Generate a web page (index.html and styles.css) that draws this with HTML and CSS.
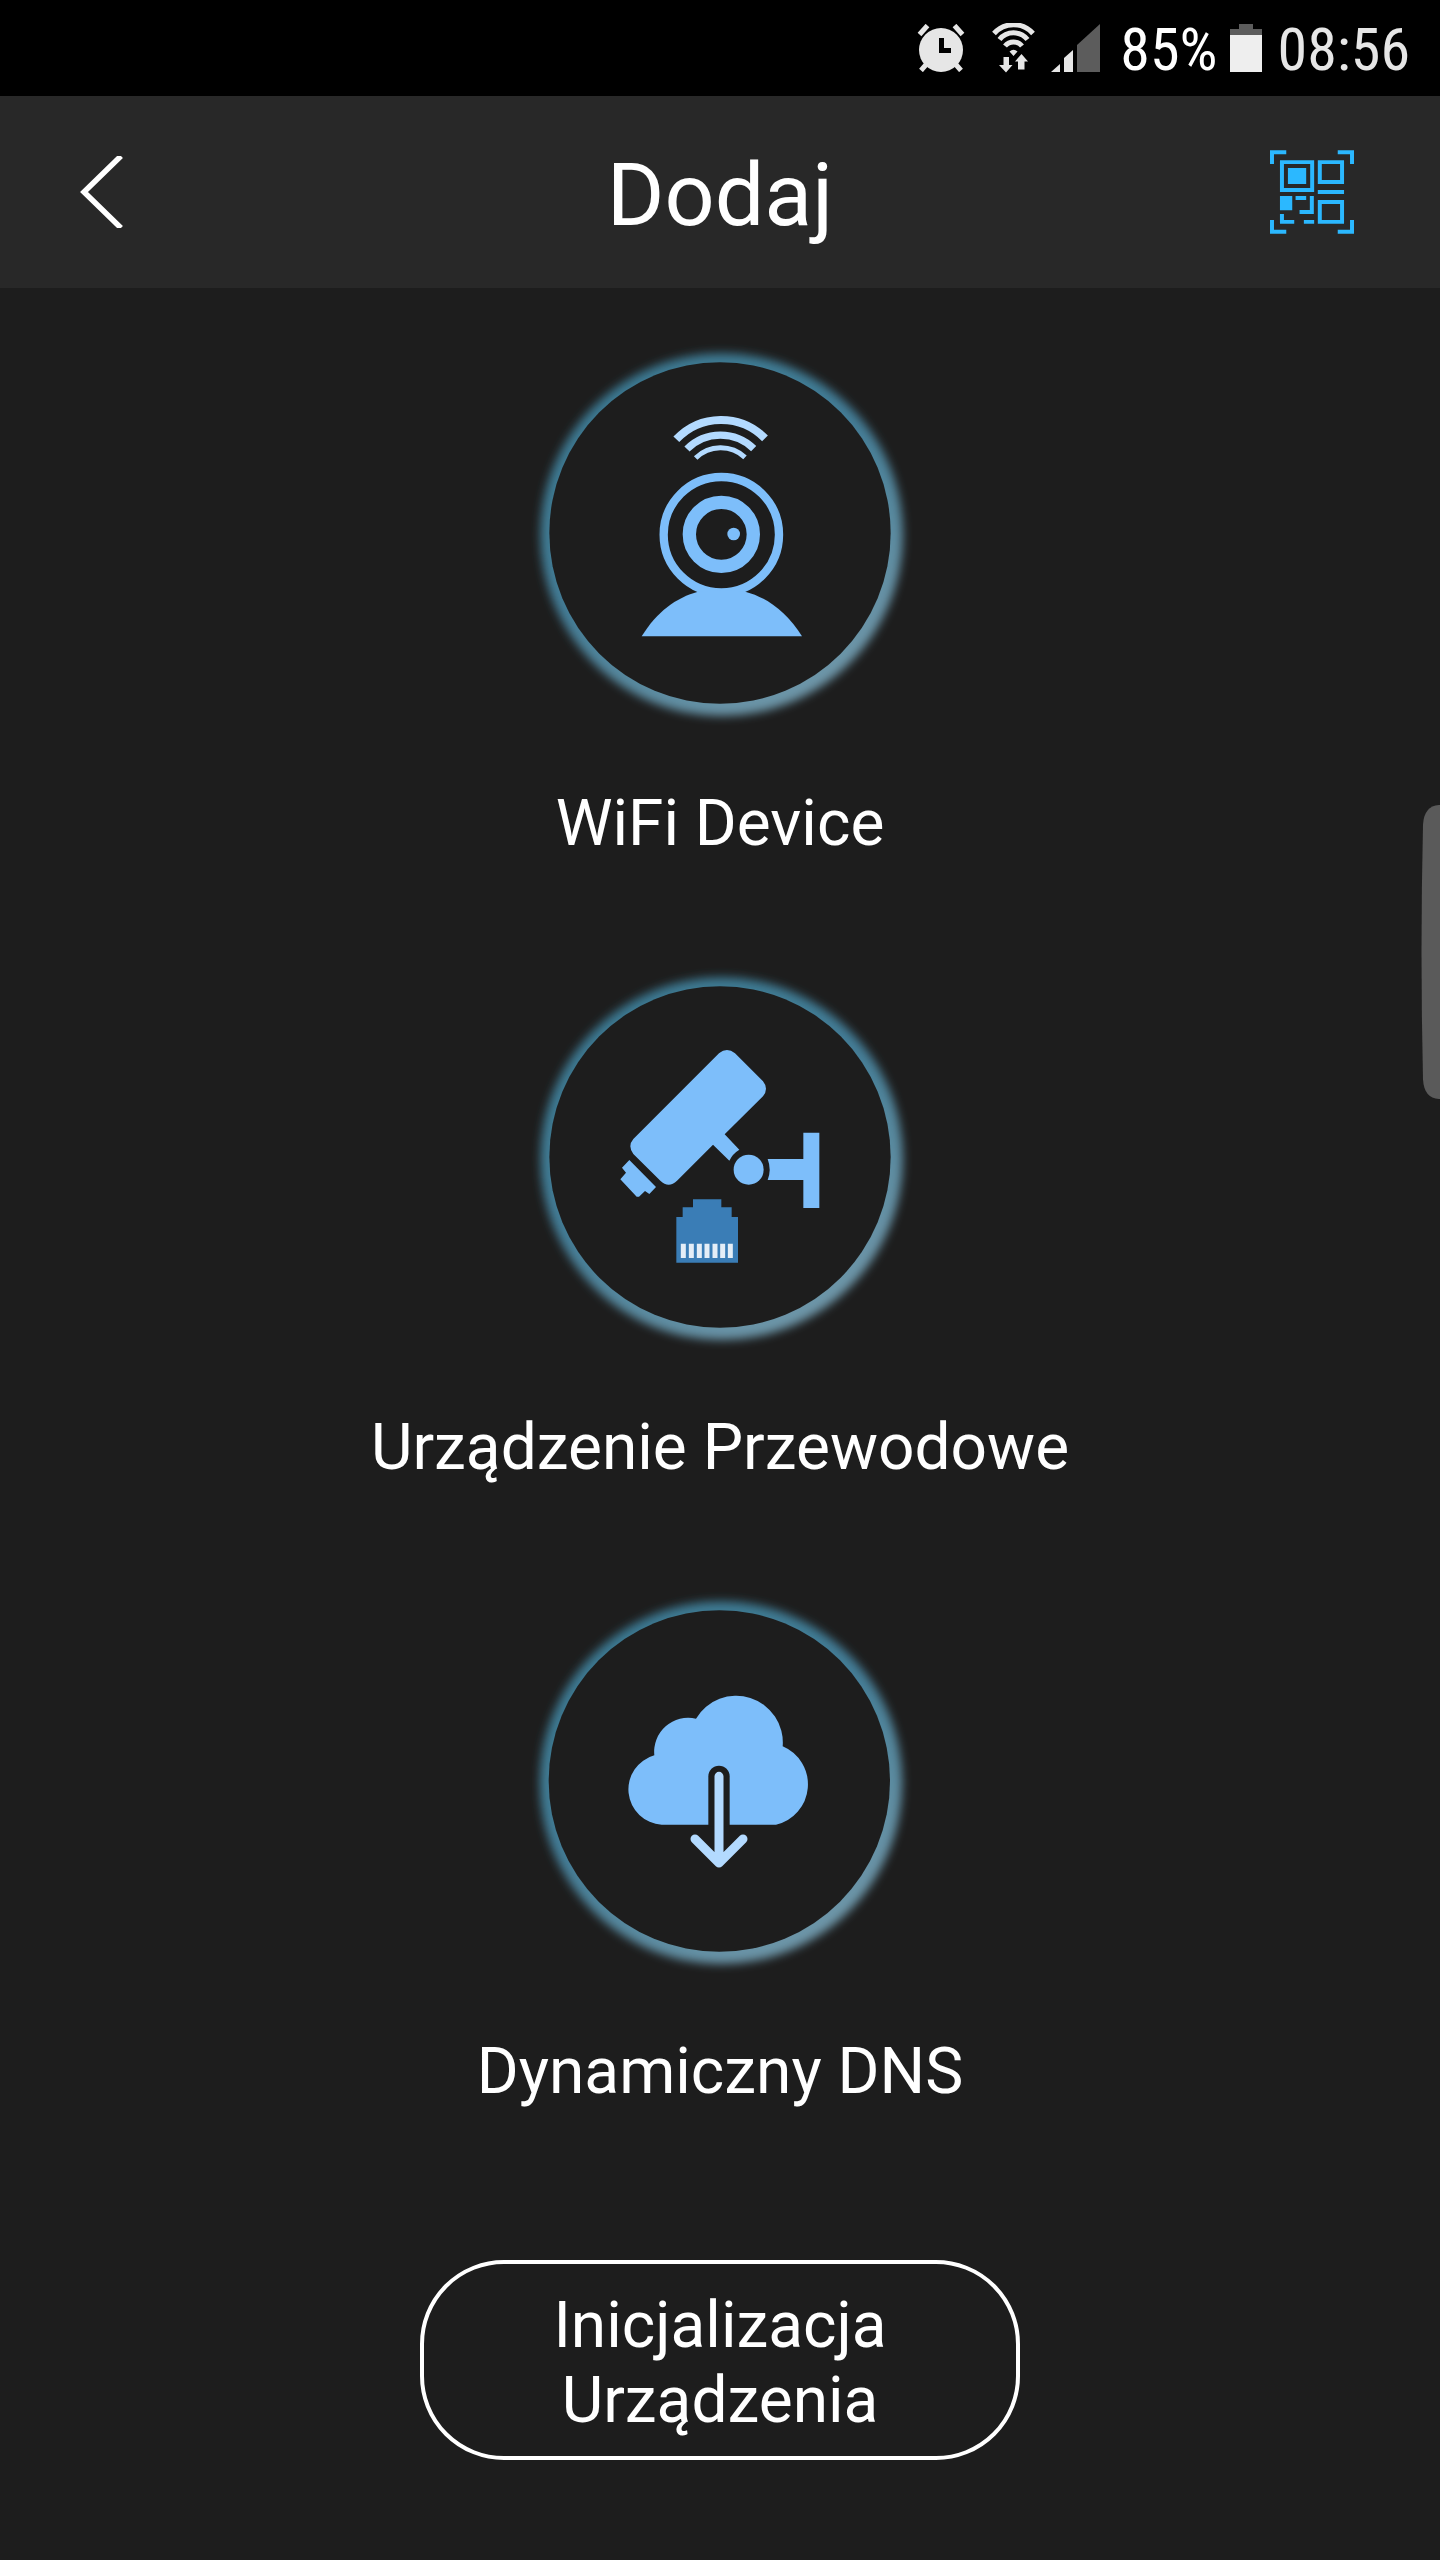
FILE: index.html
```html
<!DOCTYPE html>
<html lang="pl">
<head>
<meta charset="utf-8">
<meta name="viewport" content="width=device-width, initial-scale=1">
<title>Dodaj</title>
<link rel="stylesheet" href="styles.css">
</head>
<body>
<div class="status-bar">
  <svg class="status-alarm" width="48" height="48" viewBox="0 0 48 48" aria-hidden="true">
    <path d="M2.5 10.5l8-9M45.5 10.5l-8-9M4 46.500l6-7M44 46.500l-6-7" stroke="#e6e6e6" stroke-width="5"/>
    <circle cx="24" cy="26" r="22" fill="#e6e6e6"/>
    <path d="M22 14h5v10h7v5H22z" fill="#000"/>
  </svg>
  <svg class="status-wifi" width="43" height="50" viewBox="0 0 43 50" aria-hidden="true">
    <g fill="none" stroke="#e6e6e6" stroke-width="5">
      <path d="M2 10.500A26 26 0 0 1 41 10.500"/>
      <path d="M7.500 16.500A18 18 0 0 1 35.500 16.500"/>
      <path d="M13 23A11 11 0 0 1 30 23"/>
    </g>
    <path d="M17.500 28.500q4-3.500 8 0l-4 4.500zM11.500 34h5.500v8h3.500L14 49.500 7 42h4.500zM26 46.500v-8h-3L29.500 31l6.500 7.500h-3.500v8z" fill="#e6e6e6"/>
  </svg>
  <svg class="status-signal" width="49" height="48" viewBox="0 0 49 48" aria-hidden="true">
    <path d="M0 48l9-8v8zM13 34l9-8v22h-9z" fill="#e6e6e6"/>
    <path d="M26 21L49 0v48H26z" fill="#5c5c5c"/>
  </svg>
  <span class="status-text battery-level">85%</span>
  <svg class="status-battery" width="32" height="48" viewBox="0 0 32 48" aria-hidden="true">
    <path d="M9 0h14v5h9v6H0V5h9z" fill="#5c5c5c"/>
    <path d="M0 11h32v37H0z" fill="#eee"/>
  </svg>
  <time class="status-text clock">08:56</time>
</div>

<header class="header">
  <button class="icon-button" type="button" aria-label="Wstecz">
    <svg width="44" height="72" viewBox="0 0 44 72" aria-hidden="true">
      <path d="M41 0L4 36l37 36" fill="none" stroke="#fff" stroke-width="5.500"/>
    </svg>
  </button>
  <h1 class="title">Dodaj</h1>
  <button class="icon-button" type="button" aria-label="Skanuj kod QR">
    <svg width="84" height="84" viewBox="90 60 253 252" aria-hidden="true">
      <g fill="none" stroke="#2bb8ff" stroke-width="12">
        <path d="M96 102V66h43M294 66h43v36M96 270v36h43M294 306h43v-36"/>
        <path d="M126 96h91v84h-91zM240 96h67v60h-67zM240 216h67v60h-67z"/>
        <path d="M234 186h79M167 204h32M216 198v48h-37M126 252v24h37M192 276h31"/>
      </g>
      <path d="M144 114h55v48h-55zM120 198h37v43h-37z" fill="#2bb8ff"/>
    </svg>
  </button>
</header>

<main class="content">
  <svg class="defs" width="0" height="0" aria-hidden="true">
    <defs>
      <linearGradient id="glow-color" x1="0.2" y1="0.1" x2="0.75" y2="0.95">
        <stop offset="0" stop-color="#3b7891"/>
        <stop offset="0.450" stop-color="#447d96"/>
        <stop offset="1" stop-color="#7097a9"/>
      </linearGradient>
      <filter id="glow-blur" x="-10%" y="-10%" width="120%" height="120%">
        <feGaussianBlur stdDeviation="15"/>
      </filter>
      <symbol id="ring" viewBox="0 0 1200 1200">
        <circle cx="605" cy="605" r="544" fill="url(#glow-color)" filter="url(#glow-blur)"/>
        <circle cx="600" cy="600" r="512" fill="#1d1d1d"/>
      </symbol>
    </defs>
  </svg>

  <nav class="devices">
    <a class="device" href="#wifi">
      <svg class="device-icon" viewBox="0 9 1200 1200" aria-hidden="true">
        <use href="#ring" x="0" y="9" width="1200" height="1200"/>
        <g fill="none" stroke="#b3daff">
          <path d="M469 328A184 184 0 0 1 735 325" stroke-width="24"/>
          <path d="M501 357A142 142 0 0 1 701 356" stroke-width="22"/>
          <path d="M527 384A107 107 0 0 1 675 382" stroke-width="15"/>
        </g>
        <g fill="none" stroke="#7dbefa">
          <circle cx="604" cy="614" r="173" stroke-width="25"/>
          <circle cx="604" cy="613" r="96" stroke-width="40"/>
        </g>
        <g fill="#7dbefa">
          <circle cx="641" cy="612" r="19"/>
          <path d="M365 919C410 845 470 802 534 785L604 780l72 5C740 802 800 845 846 919z"/>
        </g>
      </svg>
      <span class="device-label">WiFi Device</span>
    </a>

    <a class="device" href="#wired">
      <svg class="device-icon" viewBox="0 -9 1200 1200" aria-hidden="true">
        <use href="#ring" x="0" y="-9" width="1200" height="1200"/>
        <g fill="#7dbefa">
          <path d="M597 280q24-20 48 0l84 84q18 22 0 45L614 523l44 46q-20 12-30 33l-49-48L471 662q-25 24-50 0l-81-80q-18-24 0-45z"/>
          <path d="M328 600l80 81-20 21-13-9-18 17h-7l-49-52 17-20-12-15z"/>
          <circle cx="686" cy="629" r="45"/>
          <path d="M743 597h107v-79h48v226h-48v-84H743q12-31 0-63z"/>
        </g>
        <path d="M469 771h19v-29h31v-24h85v24h31v29h19v137H469z" fill="#3a7db6"/>
        <path d="M490 851v43M514 851v43M538 851v43M561 851v43M585 851v43M608 851v43M631 851v43" stroke="#e4eef7" stroke-width="15"/>
      </svg>
      <span class="device-label">Urządzenie Przewodowe</span>
    </a>

    <a class="device" href="#ddns">
      <svg class="device-icon" viewBox="0 4 1200 1200" aria-hidden="true">
        <use href="#ring" x="-2" y="4" width="1200" height="1200"/>
        <path d="M425 735A106 106 0 0 1 403 527A102 102 0 0 1 528 417A140 140 0 0 1 788 500A124 124 0 0 1 768 735z" fill="#7dbefa"/>
        <path d="M565 740V590a32 32 0 0 1 64 0v150z" fill="#1d1d1d"/>
        <path d="M597 590v258M525 778l72 72 72-72" fill="none" stroke="#b3daff" stroke-width="27" stroke-linecap="round" stroke-linejoin="round"/>
      </svg>
      <span class="device-label">Dynamiczny DNS</span>
    </a>
  </nav>

  <button class="init-button" type="button">Inicjalizacja Urządzenia</button>
</main>

<svg class="edge-handle" width="19" height="294" viewBox="0 0 19 296" preserveAspectRatio="none" aria-hidden="true">
  <path d="M19 0h-1Q3 1 2 20Q-1 148 2 276Q3 295 18 296h1z" fill="#5a5a5a"/>
</svg>
</body>
</html>
```
FILE: styles.css
```css
* {
  box-sizing: border-box;
}

body {
  margin: 0;
  min-height: 100vh;
  background: #1d1d1d;
  color: #fff;
  font-family: Roboto, "Liberation Sans", sans-serif;
  font-size: 64px;
  line-height: 75px;
}

svg {
  display: block;
  flex: none;
}

button {
  border: 0;
  background: none;
  color: inherit;
  font: inherit;
  cursor: pointer;
}

.status-bar {
  display: flex;
  justify-content: flex-end;
  align-items: center;
  height: 96px;
  padding: 0 30px;
  background: #000;
  font-family: "Roboto Condensed", Roboto, sans-serif;
  font-size: 60px;
  line-height: 72px;
}

.status-text {
  padding-top: 4px;
}

.status-wifi {
  margin: 0 16px 0 27px;
}

.battery-level {
  margin: 0 12px 0 20px;
}

.clock {
  margin-left: 16px;
  color: #e6e6e6;
}

.header {
  display: flex;
  justify-content: space-between;
  align-items: center;
  height: 192px;
  padding: 0 80px;
  background: #282828;
}

.icon-button {
  display: flex;
  flex: 1 1 0;
  padding: 0;
}

.icon-button:last-child {
  justify-content: flex-end;
  padding-right: 6px;
}

.title {
  margin: 0;
  padding: 6px 0 0 6px;
  font-size: 88px;
  line-height: 104px;
  font-weight: 400;
}

.content {
  display: flex;
  flex-direction: column;
  align-items: center;
  padding: 45px 24px 100px;
}

.defs {
  position: absolute;
}

.devices {
  display: flex;
  flex-direction: column;
  gap: 96px;
}

.device {
  display: flex;
  flex-direction: column;
  align-items: center;
  gap: 53px;
  color: inherit;
  text-align: center;
  text-decoration: none;
}

.device-icon {
  width: 400px;
  height: 400px;
}

.init-button {
  width: 600px;
  max-width: 100%;
  margin-top: 151px;
  padding: 24px 100px 18px;
  border: 4px solid #fff;
  border-radius: 84px;
}

.edge-handle {
  position: fixed;
  top: 805px;
  right: 0;
}
```
